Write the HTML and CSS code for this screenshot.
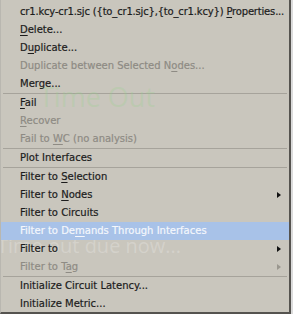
FILE: index.html
```html
<!DOCTYPE html>
<html>
<head>
<meta charset="utf-8">
<link rel="stylesheet" href="styles.css">
</head>
<body>
<div class="menu">
  <div class="ghost ghost-green">Time Out</div>
  <div class="ghost ghost-white">Time out due now...</div>
  <div class="item tight">cr1.kcy-cr1.sjc ({to_cr1.sjc},{to_cr1.kcy}) <u>P</u>roperties...</div>
  <div class="item"><u>D</u>elete...</div>
  <div class="item">D<u>u</u>plicate...</div>
  <div class="item disabled">Duplicate between Selected N<u>o</u>des...</div>
  <div class="item">Merge...</div>
  <div class="sep"></div>
  <div class="item"><u>F</u>ail</div>
  <div class="item disabled"><u>R</u>ecover</div>
  <div class="item disabled">Fail to <u>W</u>C (no analysis)</div>
  <div class="sep"></div>
  <div class="item">Plot Interfaces</div>
  <div class="sep"></div>
  <div class="item">Filter to <u>S</u>election</div>
  <div class="item sub">Filter to <u>N</u>odes<span class="arrow"></span></div>
  <div class="item">Filter to Circuits</div>
  <div class="item active">Filter to De<u>m</u>ands Through Interfaces</div>
  <div class="item sub">Filter to<span class="arrow"></span></div>
  <div class="item disabled sub">Filter to T<u>a</u>g<span class="arrow"></span></div>
  <div class="sep"></div>
  <div class="item">Initialize Circuit Latency...</div>
  <div class="item">Initialize Metric...</div>
</div>
</body>
</html>
```
FILE: styles.css
```css
html, body {
  margin: 0;
  padding: 0;
  background: #dcdcdc;
}
.menu {
  position: relative;
  width: 288px;
  height: 309px;
  padding-top: 3px;
  background: #c9c6bd;
  border-left: 1px solid #b9b7b0;
  border-right: 2px solid #55534f;
  border-bottom: 2px solid #55534f;
  display: flex;
  flex-direction: column;
  overflow: hidden;
  font-family: "DejaVu Sans", sans-serif;
  font-size: 10px;
  color: #1c1c1c;
  -webkit-text-stroke: 0.2px currentColor;
}
.item {
  position: relative;
  z-index: 1;
  height: 18px;
  line-height: 18px;
  padding-left: 19px;
  white-space: nowrap;
  flex: none;
}
.tight {
  letter-spacing: -0.18px;
}
.item u {
  text-decoration-thickness: 1px;
  text-underline-offset: 2px;
}
.disabled {
  color: #8e8b84;
}
.active {
  z-index: 0;
  background: #a8c2e8;
  color: #f4f7fc;
}
.sep {
  flex: none;
  height: 1px;
  margin: 0 2px 0 2px;
  background: #a6a39b;
}
.arrow {
  position: absolute;
  right: 8px;
  top: 6px;
  width: 0;
  height: 0;
  border-top: 3px solid transparent;
  border-bottom: 3px solid transparent;
  border-left: 4px solid #111;
}
.disabled .arrow {
  border-left-color: #9a978f;
}
.ghost {
  position: absolute;
  z-index: 0;
  white-space: nowrap;
  pointer-events: none;
  font-family: "Open Sans", sans-serif;
  -webkit-text-stroke: 0;
}
.ghost-green {
  left: 38px;
  top: 78px;
  font-size: 27px;
  color: rgba(150, 210, 140, 0.25);
}
.ghost-white {
  left: -4px;
  top: 232px;
  font-size: 20px;
  color: rgba(255, 255, 255, 0.22);
}
```
